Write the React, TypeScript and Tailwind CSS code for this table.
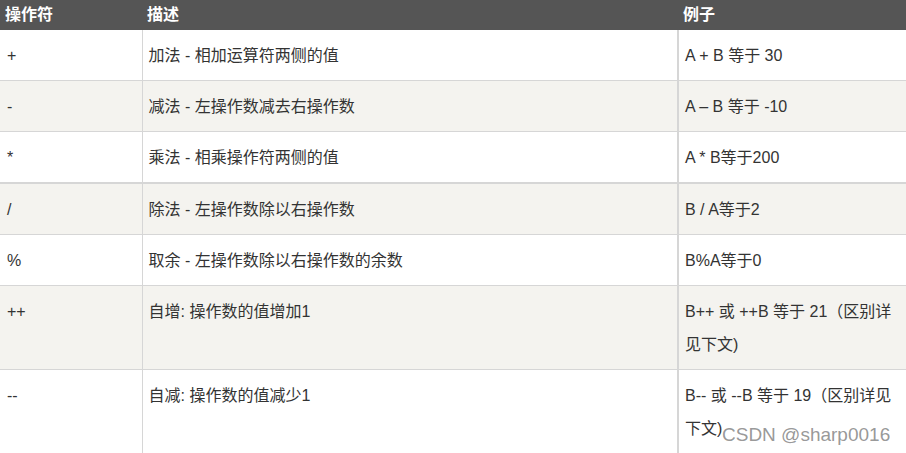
import React from 'react'

type Row = { op: string; desc: string; example: string }

const rows: Row[] = [
  { op: '+', desc: '加法 - 相加运算符两侧的值', example: 'A + B 等于 30' },
  { op: '-', desc: '减法 - 左操作数减去右操作数', example: 'A – B 等于 -10' },
  { op: '*', desc: '乘法 - 相乘操作符两侧的值', example: 'A * B等于200' },
  { op: '/', desc: '除法 - 左操作数除以右操作数', example: 'B / A等于2' },
  { op: '%', desc: '取余 - 左操作数除以右操作数的余数', example: 'B%A等于0' },
  { op: '++', desc: '自增: 操作数的值增加1', example: 'B++ 或 ++B 等于 21（区别详见下文)' },
  { op: '--', desc: '自减: 操作数的值减少1', example: 'B-- 或 --B 等于 19（区别详见下文)' },
]

const font = { fontFamily: '"Liberation Sans", "Noto Sans CJK SC", sans-serif' }

export default function App() {
  return (
    <div className="relative w-[906px] h-[453px] overflow-hidden bg-white" style={font}>
      <table className="w-[906px] table-fixed border-collapse text-[16px] text-[#333]">
        <colgroup>
          <col className="w-[142px]" />
          <col className="w-[536px]" />
          <col className="w-[228px]" />
        </colgroup>
        <thead>
          <tr className="bg-[#555] text-white font-bold h-[30px] text-left">
            <th className="pl-[5px] leading-[30px] font-bold">操作符</th>
            <th className="pl-[5px] leading-[30px] font-bold">描述</th>
            <th className="pl-[5px] leading-[30px] font-bold">例子</th>
          </tr>
        </thead>
        <tbody>
          {rows.map((r, i) => (
            <tr
              key={r.op}
              className={
                (i % 2 === 1 ? 'bg-[#f4f3ef] ' : 'bg-white ') +
                (i === 2 ? 'border-b-2 border-[#d6d6d6]' : 'border-b border-[#d6d6d6]')
              }
            >
              <td className="align-top px-[7px] pt-[9px] pb-[8px] leading-[33px] border-r border-[#d6d6d6]">{r.op}</td>
              <td className="align-top px-[6px] pt-[9px] pb-[8px] leading-[33px] border-r-2 border-[#d6d6d6]">{r.desc}</td>
              <td className="align-top px-[6px] pt-[9px] pb-[8px] leading-[33px]">{r.example}</td>
            </tr>
          ))}
        </tbody>
      </table>
      <div className="absolute left-[722px] top-[422px] text-[19px] leading-[26px] text-[#8c8c8c]/90">
        CSDN @sharp0016
      </div>
    </div>
  )
}
